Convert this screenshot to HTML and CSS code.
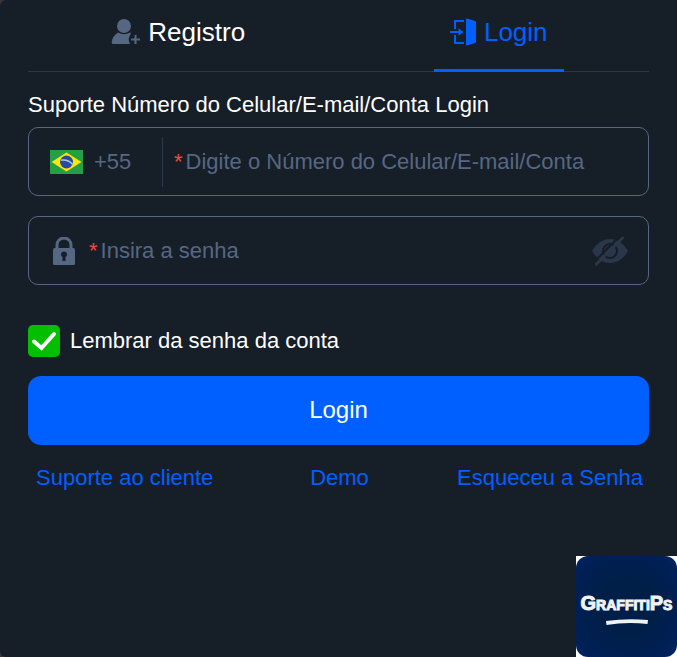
FILE: index.html
```html
<!DOCTYPE html>
<html lang="pt-BR">

<head>
    <meta charset="UTF-8">
    <meta name="viewport" content="width=device-width, initial-scale=1.0">
    <title>Login</title>
    <link rel="stylesheet" href="styles.css">
</head>

<body>
    <main class="page">
        <nav class="tabs">
            <a href="#registro" class="tab">
                <svg width="29" height="26" viewBox="0 0 29 26" fill="currentColor" aria-hidden="true">
                    <circle cx="13" cy="7" r="7" />
                    <path d="M7 13.5Q13 17 19 13.5L20 14.5Q16 20 19 25H2Q.5 25 .7 23Q1.500 17 7 13.500Z" />
                    <path d="M24.500 16v9M20 20.500h9" fill="none" stroke="currentColor" stroke-width="2" />
                </svg>
                Registro
            </a>
            <a href="#login" class="tab active" aria-current="page">
                <svg width="26" height="28" viewBox="0 0 26 28" fill="currentColor" aria-hidden="true">
                    <path d="M16 1.500Q16 .3 17.200.6L25 3Q26 3.300 26 4.500v19q0 1-1 1.400L17.200 27.400Q16 27.700 16 26.500Z" />
                    <path d="M14 3H5v8M5 17v8h9M0 14h10" fill="none" stroke="currentColor" stroke-width="2" />
                    <path d="M8.500 10.200L13.500 14l-5 3.800Z" />
                </svg>
                Login
            </a>
        </nav>

        <form class="form">
            <label for="account" class="title">Suporte Número do Celular/E-mail/Conta Login</label>
            <div class="field">
                <button type="button" class="country">
                    <svg width="33" height="24" viewBox="0 0 33 24" aria-hidden="true">
                        <rect width="33" height="24" fill="#249f46" />
                        <path d="M1.500 12L16.500 2.500 31.500 12l-15 9.500Z" fill="#fbe60c" />
                        <circle cx="16.500" cy="12" r="6.500" fill="#2b49a2" />
                        <path d="M10.500 10.200Q18 9 22.500 14.200" fill="none" stroke="#9fd0d8" stroke-width="1.300" />
                    </svg>
                    +55
                </button>
                <label for="account" class="required">*</label>
                <input id="account" class="input" type="text" placeholder="Digite o Número do Celular/E-mail/Conta">
            </div>

            <div class="field">
                <svg class="lock" width="22" height="28" viewBox="0 0 22 28" aria-hidden="true">
                    <path d="M4 13V8a7 7 0 0 1 14 0v5" fill="none" stroke="#566783" stroke-width="3" />
                    <path d="M1.500 11h19Q22 11 22 12.500v14q0 1.500-1.500 1.500h-19Q0 28 0 26.500v-14Q0 11 1.500 11Z" fill="#566783" />
                    <path d="M9.500 24v-4a3 3 0 1 1 3 0v4Z" fill="#161e28" />
                </svg>
                <label for="password" class="required">*</label>
                <input id="password" class="input" type="password" placeholder="Insira a senha">
                <button type="button" class="eye" aria-label="Mostrar senha">
                    <svg width="36" height="30" viewBox="0 0 36 30" aria-hidden="true">
                        <path d="M0 15Q7 3 18 3t18 12Q29 27 18 27T0 15Z" fill="#2a374b" />
                        <circle cx="18" cy="15" r="7" fill="none" stroke="#161e28" stroke-width="2" />
                        <path d="M14 15a4 4 0 0 1 4-4" fill="none" stroke="#161e28" stroke-width="2" />
                        <path d="M1 27L29 -1" stroke="#161e28" stroke-width="2" />
                        <path d="M3.500 29L31.500 1" stroke="#2a374b" stroke-width="3" />
                    </svg>
                </button>
            </div>

            <div class="remember">
                <input id="remember" class="check" type="checkbox" checked>
                <label for="remember">Lembrar da senha da conta</label>
            </div>

            <button type="submit" class="submit">Login</button>
        </form>

        <div class="links">
            <a href="#suporte">Suporte ao cliente</a>
            <a href="#demo">Demo</a>
            <a href="#senha" class="forgot">Esqueceu a Senha</a>
        </div>
    </main>

    <div class="badge">
        <div class="logo">
            <span class="logo-text"><span class="big">G</span>RAFFITI<span class="big">P</span>S</span>
            <svg width="44" height="6" viewBox="0 0 44 6" aria-hidden="true">
                <path d="M1 2Q22-1 43 1l-.5 4Q22 2.500 1.500 6Z" fill="#f1f2f4" />
            </svg>
        </div>
    </div>
</body>

</html>
```

FILE: styles.css
```css
* {
    box-sizing: border-box;
}

body {
    margin: 0;
    font-family: "Liberation Sans", Arial, sans-serif;
    font-size: 22px;
    color: #fff;
    background-color: #3a3433;
}

.page {
    min-height: 100vh;
    padding: 0 28px;
    background-color: #161e28;
    border-radius: 6px 0 0 6px;
}

a {
    color: #0060ff;
    text-decoration: none;
}

button {
    padding: 0;
    border: none;
    background: none;
    font: inherit;
    cursor: pointer;
}

.tabs {
    display: grid;
    grid-template-columns: 1fr 1fr;
    column-gap: 20px;
    justify-items: center;
    height: 72px;
    border-bottom: 1px solid #2a374b;
}

.tab {
    display: flex;
    align-items: center;
    justify-content: center;
    gap: 8px;
    min-width: 130px;
    height: 72px;
    padding-bottom: 5px;
    border-bottom: 3px solid transparent;
    font-size: 26px;
    color: #fff;
}

.tab svg {
    color: #566783;
}

.tab.active {
    border-color: #0060ff;
    color: #0060ff;
}

.tab.active svg {
    color: #0060ff;
}

.title {
    display: block;
    padding: 20px 0 9px;
    line-height: 26px;
}

.field {
    display: flex;
    align-items: center;
    height: 69px;
    margin-bottom: 20px;
    padding: 0 20px 0 21px;
    border: 1px solid #566783;
    border-radius: 10px;
}

.country {
    display: flex;
    align-items: center;
    gap: 11px;
    width: 113px;
    height: 50px;
    border-right: 1px solid #2a374b;
    color: #566783;
}

.required {
    margin: 0 3px 0 11px;
    color: #ea4e3d;
}

.lock {
    margin: 0 3px;
}

.input {
    flex: 1;
    min-width: 0;
    height: 50px;
    padding: 0;
    border: none;
    outline: none;
    background: none;
    font: inherit;
    color: #fff;
}

.input::placeholder {
    color: #566783;
    opacity: 1;
}

.eye {
    display: flex;
}

.remember {
    display: flex;
    align-items: center;
    gap: 10px;
    margin: 40px 0 19px;
}

.check {
    appearance: none;
    width: 32px;
    height: 32px;
    margin: 0;
    border-radius: 5px;
    background-color: #2a374b;
}

.check:checked {
    background-color: #04be02;
    background-image: url("data:image/svg+xml,%3Csvg xmlns='http://www.w3.org/2000/svg' viewBox='0 0 32 32'%3E%3Cpath d='M6 16.500l7.500 6.500L26 9' fill='none' stroke='white' stroke-width='4' stroke-linecap='round'/%3E%3C/svg%3E");
}

.submit {
    width: 100%;
    height: 69px;
    padding-bottom: 2px;
    border-radius: 13px;
    background-color: #0060ff;
    font-size: 24px;
    color: #fff;
}

.links {
    display: grid;
    grid-template-columns: 1fr auto 1fr;
    padding: 20px 6px 20px 8px;
    line-height: 26px;
}

.forgot {
    text-align: right;
}

.badge {
    position: fixed;
    right: 0;
    bottom: 0;
    background-color: #fff;
}

.logo {
    display: flex;
    flex-direction: column;
    align-items: center;
    justify-content: center;
    width: 101px;
    height: 101px;
    border-radius: 12px;
    background: radial-gradient(#001f48 40%, #002058 85%, #002a70);
}

.logo-text {
    font-size: 14px;
    font-weight: bold;
    line-height: 28px;
    color: #f1f2f4;
    -webkit-text-stroke: 1px #f1f2f4;
}

.big {
    font-size: 20px;
}
```
